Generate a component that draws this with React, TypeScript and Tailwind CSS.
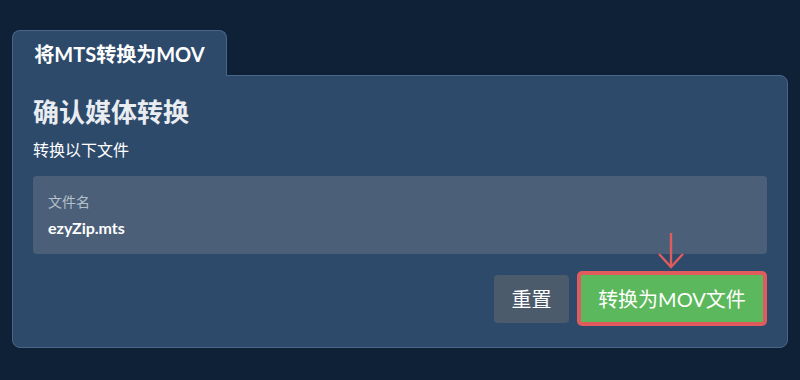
import React from 'react';

const App: React.FC = () => {
  return (
    <div
      className="w-[800px] h-[380px] bg-[#0f2136] pt-[30px] px-[12px]"
      style={{ fontFamily: 'Lato, "Noto Sans CJK SC", sans-serif' }}
    >
      <div className="w-[776px]">
        <div className="relative z-10 -mb-px w-[215px] h-[46px] rounded-t-[8px] border border-b-0 border-[#4a6587] bg-[#2d4a6b] flex items-center justify-center">
          <span className="text-[20px] font-bold text-white">将MTS转换为MOV</span>
        </div>
        <div className="relative h-[273px] rounded-b-[8px] rounded-tr-[8px] border border-[#4a6587] bg-[#2d4a6b] px-[20px] pt-[20px]">
          <h2 className="text-[26px] leading-[32px] font-bold text-[#e9edf2]">确认媒体转换</h2>
          <p className="mt-[11px] text-[16px] leading-[22px] text-white">转换以下文件</p>
          <div className="mt-[15px] h-[78px] rounded-[4px] bg-[#4b6078] px-[15px] pt-[16px]">
            <div className="text-[14px] leading-[20px] text-[#b4c0cc]">文件名</div>
            <div className="mt-[5px] text-[16px] leading-[22px] font-bold text-white">ezyZip.mts</div>
          </div>
          <div className="mt-[17px] flex justify-end items-center gap-[8px]">
            <button className="h-[48px] w-[75px] rounded-[4px] bg-[#4b5b6c] text-[20px] text-white">重置</button>
            <button className="h-[55px] w-[190px] rounded-[5px] border-[4px] border-[#e05c5c] bg-[#5cb85c] text-[20px] text-white">
              转换为MOV文件
            </button>
          </div>
          <svg
            className="absolute left-[645px] top-[157px]"
            width="26"
            height="36"
            viewBox="0 0 26 36"
            fill="none"
            stroke="#e05c5c"
            strokeWidth="2.4"
          >
            <path d="M13 0 V34" />
            <path d="M1 21 L13 34 L25 21" />
          </svg>
        </div>
      </div>
    </div>
  );
};

export default App;
